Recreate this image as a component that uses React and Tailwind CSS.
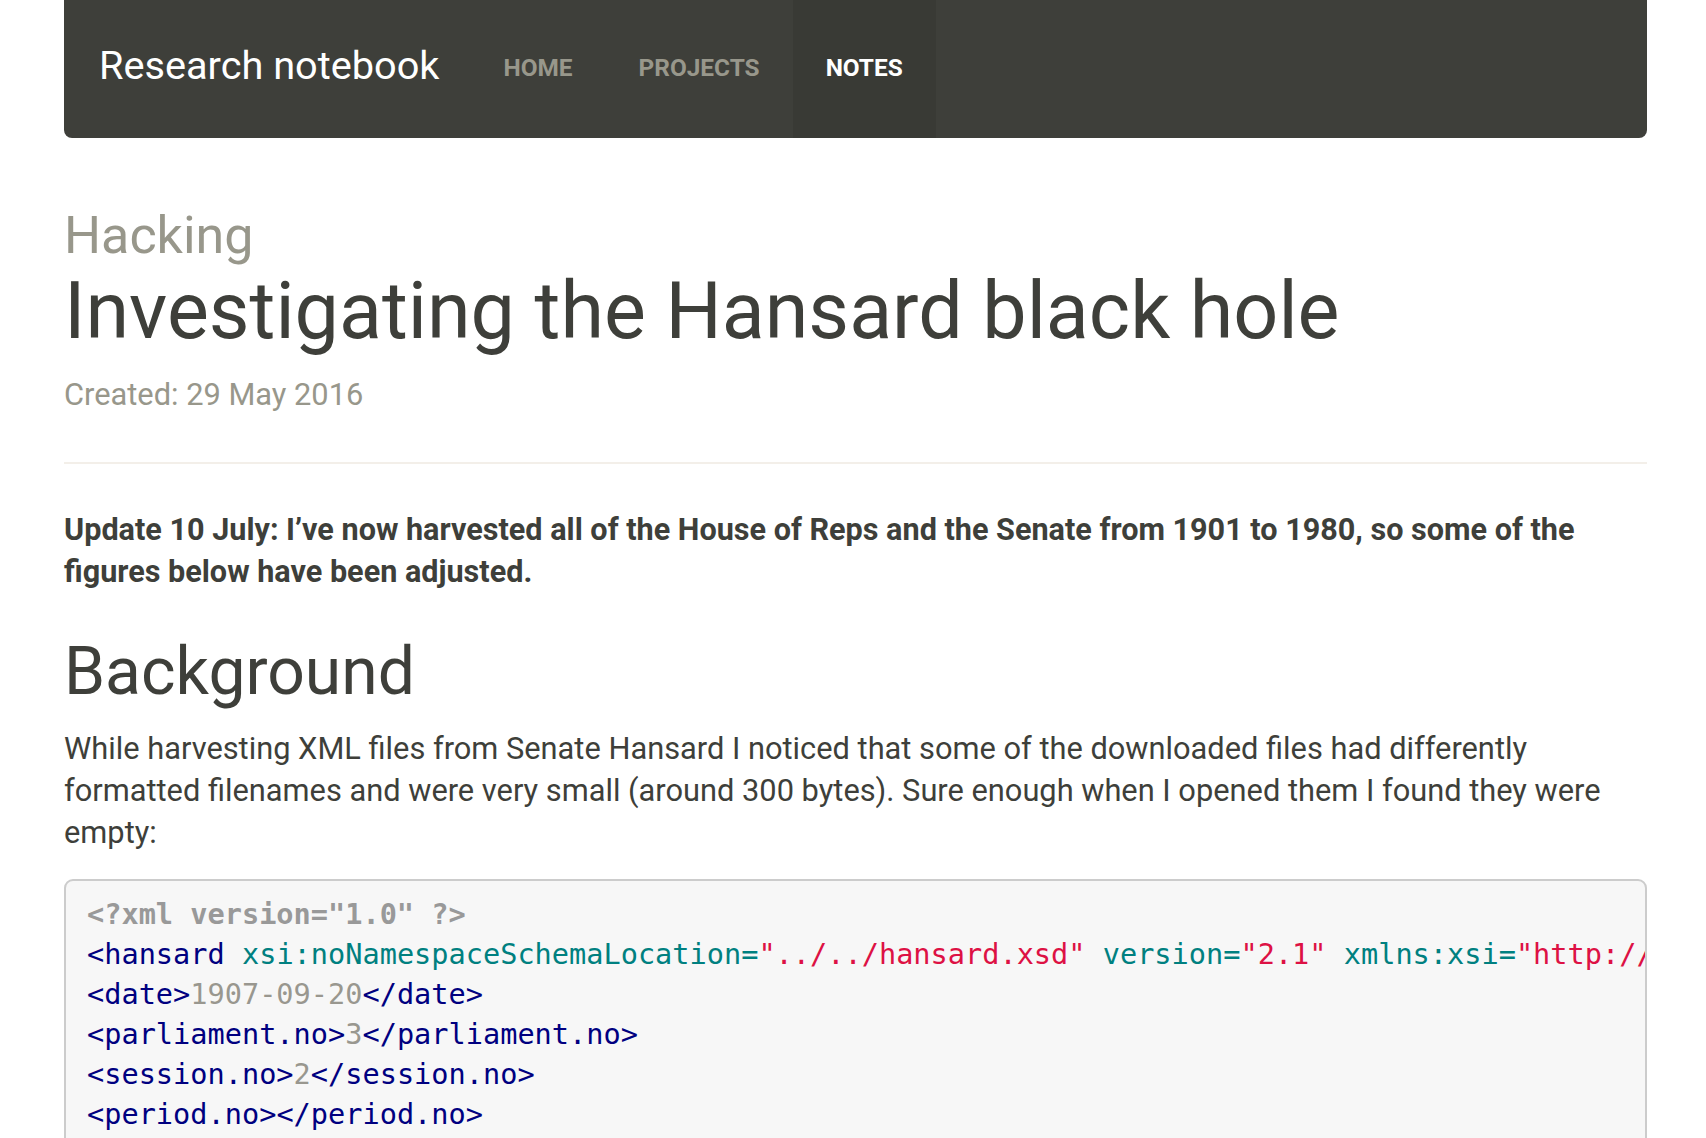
import React from "react";

const P = "text-[#999999] font-bold";
const T = "text-[#000080]";
const A = "text-[#008080]";
const S = "text-[#dd1144]";
const X = "text-[#99978f]";

const codeLines = [
  [[P, '<?xml version="1.0" ?>']],
  [
    [T, "<hansard"],
    ["", " "],
    [A, "xsi:noNamespaceSchemaLocation="],
    [S, '"../../hansard.xsd"'],
    ["", " "],
    [A, "version="],
    [S, '"2.1"'],
    ["", " "],
    [A, "xmlns:xsi="],
    [S, '"http://www.w3.org/2001/XMLSchema-instance"'],
    [T, ">"],
  ],
  [[T, "<date>"], [X, "1907-09-20"], [T, "</date>"]],
  [[T, "<parliament.no>"], [X, "3"], [T, "</parliament.no>"]],
  [[T, "<session.no>"], [X, "2"], [T, "</session.no>"]],
  [[T, "<period.no>"], [T, "</period.no>"]],
  [[T, "<chamber>"], [X, "SENATE"], [T, "</chamber>"]],
  [[T, "<page.no>"], [T, "</page.no>"]],
  [[T, "<proof>"], [X, "0"], [T, "</proof>"]],
  [[T, "</hansard>"]],
];

export default function App() {
  return (
    <div
      className="min-h-screen bg-white text-[#3e3f3a]"
      style={{ fontFamily: "Roboto, 'Liberation Sans', sans-serif" }}
    >
      <div className="pl-[64px] pr-[59px]">
        <nav className="h-[138px] bg-[#3e3f3a] rounded-b-[8px] flex items-stretch">
          <a className="pl-[35px] pr-[31px] flex items-center text-[39.7px] text-white leading-none pb-[6px]">
            Research notebook
          </a>
          <ul className="flex items-stretch">
            <li className="px-[33px] flex items-center text-[24.4px] font-bold uppercase text-[#98978b] leading-none pb-[2px]">
              Home
            </li>
            <li className="px-[33px] flex items-center text-[24.4px] font-bold uppercase text-[#98978b] leading-none pb-[2px]">
              Projects
            </li>
            <li className="px-[33px] flex items-center text-[24.4px] font-bold uppercase text-white bg-[#393a35] leading-none pb-[2px]">
              Notes
            </li>
          </ul>
        </nav>

        <h3 className="mt-[69px] text-[52px] leading-[57px] text-[#98978b] font-normal">
          Hacking
        </h3>
        <h1 className="mt-[3px] text-[79px] leading-[88px] font-normal">
          Investigating the Hansard black hole
        </h1>
        <p className="mt-[18px] text-[30.8px] leading-[43px] text-[#98978b]">
          Created: 29 May 2016
        </p>
        <hr className="mt-[46px] h-[2px] border-0 bg-[#f3efe9]" />

        <p className="mt-[45px] text-[30.6px] leading-[42px] font-bold">
          Update 10 July: I’ve now harvested all of the House of Reps and the
          Senate from 1901 to 1980, so some of the figures below have been
          adjusted.
        </p>

        <h2 className="mt-[43px] text-[66px] leading-[72px] font-normal">
          Background
        </h2>
        <p className="mt-[20px] text-[30.8px] leading-[42px]">
          While harvesting XML files from Senate Hansard I noticed that some of
          the downloaded files had differently formatted filenames and were very
          small (around 300 bytes). Sure enough when I opened them I found they
          were empty:
        </p>

        <pre
          className="mt-[25px] mb-[40px] border-2 border-[#cccccc] rounded-[9px] bg-[#f7f7f7] pt-[13px] pb-[21px] px-[21px] overflow-hidden whitespace-pre text-[28.6px] leading-[40px]"
          style={{ fontFamily: "'DejaVu Sans Mono', 'Liberation Mono', monospace" }}
        >
          {codeLines.map((line, i) => (
            <div key={i}>
              {line.map(([cls, txt], j) => (
                <span key={j} className={cls}>
                  {txt}
                </span>
              ))}
            </div>
          ))}
        </pre>
      </div>
    </div>
  );
}
